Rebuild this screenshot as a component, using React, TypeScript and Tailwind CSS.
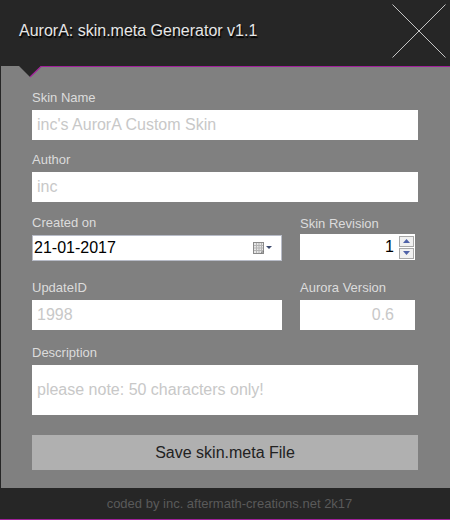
import React from "react";

const font = { fontFamily: '"Liberation Sans", Arial, sans-serif' };

function CalendarIcon() {
  return (
    <svg width="20" height="12" viewBox="0 0 20 12" className="shrink-0">
      <rect x="0.5" y="0.5" width="10" height="11" fill="#e6e6e6" stroke="#8a8a8a" />
      <path d="M1 3.5H10M1 6H10M1 8.5H10M3.5 1V11M6 1V11M8.5 1V11" stroke="#b4b4b4" strokeWidth="1" />
      <path d="M8 11.5L10.5 9" stroke="#666" strokeWidth="1" />
      <path d="M13 4H19L16 7Z" fill="#3c4a6e" />
    </svg>
  );
}

function Spinner() {
  return (
    <div className="flex flex-col gap-px pr-px pt-px pb-px">
      <div className="flex h-[11px] w-[15px] items-center justify-center border border-[#a8a8a8] bg-[#f0f0f0]">
        <svg width="7" height="4" viewBox="0 0 7 4"><path d="M0 4L3.5 0L7 4Z" fill="#4f62a8" /></svg>
      </div>
      <div className="flex h-[11px] w-[15px] items-center justify-center border border-[#a8a8a8] bg-[#f0f0f0]">
        <svg width="7" height="4" viewBox="0 0 7 4"><path d="M0 0L3.5 4L7 0Z" fill="#4f62a8" /></svg>
      </div>
    </div>
  );
}

function Label({ children, className = "" }: { children: React.ReactNode; className?: string }) {
  return <div className={"h-4 text-[13px] leading-4 text-[#dcdcdc] " + className}>{children}</div>;
}

export default function App() {
  return (
    <div className="flex h-[520px] w-[450px] flex-col bg-[#262626]" style={font}>
      {/* header */}
      <div className="flex h-[66px] shrink-0 items-start justify-between">
        <div className="pl-[19px] pt-[21px] text-[16px] leading-5 text-[#e6e6e6] [text-shadow:1px_2px_1px_#000]">
          AurorA: skin.meta Generator v1.1
        </div>
        <svg width="56" height="56" viewBox="0 0 56 56" className="mr-[3px] mt-[3px]">
          <path d="M1.5 1.5L54.5 54.5M54.5 1.5L1.5 54.5" stroke="#c4c4c4" strokeWidth="1" />
        </svg>
      </div>

      {/* panel */}
      <div className="relative ml-px flex h-[422px] w-[449px] shrink-0 flex-col bg-[#808080] pl-[31px] pr-[32px] pt-[24px]">
        <svg width="449" height="12" viewBox="0 0 449 12" className="absolute left-0 top-0">
          <path d="M18 0H40L29 11Z" fill="#262626" />
          <path d="M29 11L40 0.5H449" stroke="#a0209a" strokeWidth="1.2" fill="none" />
        </svg>

        <Label>Skin Name</Label>
        <div className="mt-1 flex h-[30px] items-center bg-white pl-[5px] text-[16px] text-[#c8c8c8]">
          inc's AurorA Custom Skin
        </div>

        <Label className="mt-[12px]">Author</Label>
        <div className="mt-1 flex h-[30px] items-center bg-white pl-[5px] text-[16px] text-[#c8c8c8]">inc</div>

        <div className="mt-[13px] flex gap-[18px]">
          <div className="flex w-[250px] flex-col">
            <Label>Created on</Label>
            <div className="mt-1 flex h-[26px] items-center justify-between border border-[#b8bcc8] bg-white pl-px pr-[8px] text-[16px] text-black">
              <span>21-01-2017</span>
              <CalendarIcon />
            </div>
          </div>
          <div className="flex w-[115px] flex-col">
            <Label className="pt-px">Skin Revision</Label>
            <div className="mt-[3px] flex h-[26px] items-center justify-end bg-white text-[16px] text-black">
              <span className="pr-[5px]">1</span>
              <Spinner />
            </div>
          </div>
        </div>

        <div className="mt-[19px] flex gap-[18px]">
          <div className="flex w-[250px] flex-col">
            <Label>UpdateID</Label>
            <div className="mt-1 flex h-[30px] items-center bg-white pl-[5px] text-[16px] text-[#c8c8c8]">1998</div>
          </div>
          <div className="flex w-[115px] flex-col">
            <Label>Aurora Version</Label>
            <div className="mt-1 flex h-[30px] items-center justify-end bg-white pr-[21px] text-[16px] text-[#c8c8c8]">0.6</div>
          </div>
        </div>

        <Label className="mt-[15px]">Description</Label>
        <div className="mt-1 flex h-[50px] items-center bg-white pl-[5px] text-[16px] text-[#c8c8c8]">
          please note: 50 characters only!
        </div>

        <button className="mt-[20px] flex h-[35px] items-center justify-center bg-[#b0b0b0] text-[16px] text-[#222]">
          Save skin.meta File
        </button>
      </div>

      {/* footer */}
      <div className="flex h-[31px] shrink-0 items-center justify-center pl-[9px] text-[13px] text-[#5a5a5a]">
        coded by inc. aftermath-creations.net 2k17
      </div>
      <div className="h-px shrink-0 bg-[#a0209a]" />
    </div>
  );
}
